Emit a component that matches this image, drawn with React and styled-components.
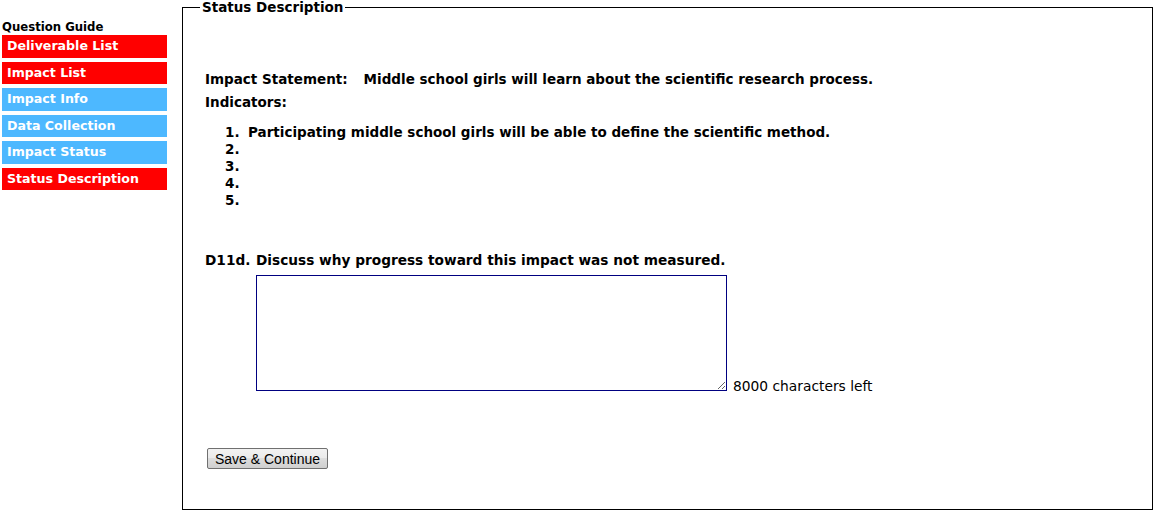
import styled, { createGlobalStyle } from "styled-components"

const GlobalStyle = createGlobalStyle`
    html, body {
        margin: 0;
        padding: 0;
        background: #FFFFFF;
    }
    body {
        font-family: Verdana, "DejaVu Sans", sans-serif;
        color: #000000;
    }
`

const guide = [
    { label: "Deliverable List", done: true },
    { label: "Impact List", done: true },
    { label: "Impact Info", done: false },
    { label: "Data Collection", done: false },
    { label: "Impact Status", done: false },
    { label: "Status Description", done: true },
]

const indicators = [
    "Participating middle school girls will be able to define the scientific method.",
    "",
    "",
    "",
    "",
]

export default function App () {
    return (
        <Page>
            <GlobalStyle />
            <Sidebar>
                <GuideTitle>Question Guide</GuideTitle>
                {guide.map((item) => (
                    <GuideLink key={item.label} $done={item.done}>
                        {item.label}
                    </GuideLink>
                ))}
            </Sidebar>
            <Panel>
                <Legend>Status Description</Legend>
                <Content>
                    <Statement>
                        <span>Impact Statement:</span>
                        <span>Middle school girls will learn about the scientific research process.</span>
                    </Statement>
                    <Label>Indicators:</Label>
                    <IndicatorList>
                        {indicators.map((text, i) => (
                            <Indicator key={i}>
                                <Num>{i + 1}.</Num>
                                <span>{text}</span>
                            </Indicator>
                        ))}
                    </IndicatorList>
                    <Question>
                        <QNum>D11d.</QNum>
                        <span>Discuss why progress toward this impact was not measured.</span>
                    </Question>
                    <AnswerRow>
                        <Answer />
                        <Counter>8000 characters left</Counter>
                    </AnswerRow>
                    <SaveButton type="button">Save &amp; Continue</SaveButton>
                </Content>
            </Panel>
        </Page>
    )
}

const Page = styled.div`
    display: flex;
    align-items: flex-start;
    width: 1156px;
    height: 512px;
`

const Sidebar = styled.div`
    width: 165px;
    margin-left: 2px;
    margin-top: 20px;
    display: flex;
    flex-direction: column;
    gap: 4px;
`

const GuideTitle = styled.div`
    font-size: 11.7px;
    font-weight: bold;
    line-height: 14px;
    margin-bottom: -3px;
`

const GuideLink = styled.div`
    height: 22.5px;
    line-height: 22px;
    padding-left: 5px;
    font-size: 12.6px;
    font-weight: bold;
    color: #FFFFFF;
    background-color: ${(p) => (p.$done ? "#FF0000" : "#4DB8FF")};
`

const Panel = styled.fieldset`
    box-sizing: border-box;
    width: 971px;
    height: 510px;
    margin: 0 0 0 15px;
    padding: 0 17px;
    border: 1px solid #000000;
    min-width: 0;
`

const Legend = styled.legend`
    padding: 0 2px;
    font-size: 13.5px;
    font-weight: bold;
    line-height: 15px;
`

const Content = styled.div`
    padding: 56px 0 0 5px;
    font-size: 13.5px;
    font-weight: bold;
`

const Statement = styled.div`
    display: flex;
    gap: 16px;
    line-height: 16px;
`

const Label = styled.div`
    margin-top: 7px;
    line-height: 16px;
`

const IndicatorList = styled.div`
    margin-top: 14px;
    padding-left: 20px;
    display: flex;
    flex-direction: column;
`

const Indicator = styled.div`
    display: flex;
    line-height: 17px;
`

const Num = styled.span`
    width: 23px;
`

const Question = styled.div`
    margin-top: 43px;
    display: grid;
    grid-template-columns: 51px auto;
    font-size: 13.7px;
    line-height: 17px;
`

const QNum = styled.span``

const AnswerRow = styled.div`
    margin-top: 6px;
    padding-left: 51px;
    display: flex;
    align-items: flex-end;
    gap: 6px;
`

const Answer = styled.textarea`
    box-sizing: border-box;
    width: 471px;
    height: 116px;
    margin: 0;
    border: 1px solid #000080;
    border-radius: 0;
    outline: none;
    font-family: "Liberation Mono", monospace;
`

const Counter = styled.span`
    font-weight: normal;
    font-size: 13.8px;
    line-height: 16px;
    margin-bottom: -3px;
`

const SaveButton = styled.button`
    display: block;
    margin: 57px 0 0 2px;
    width: 121px;
    height: 21px;
    padding: 0;
    font-family: "Liberation Sans", Arial, sans-serif;
    font-size: 14px;
    color: #000000;
    border: 1px solid #707070;
    border-radius: 2px;
    background: linear-gradient(#F2F2F2, #EBEBEB 45%, #DDDDDD 50%, #CFCFCF);
`
